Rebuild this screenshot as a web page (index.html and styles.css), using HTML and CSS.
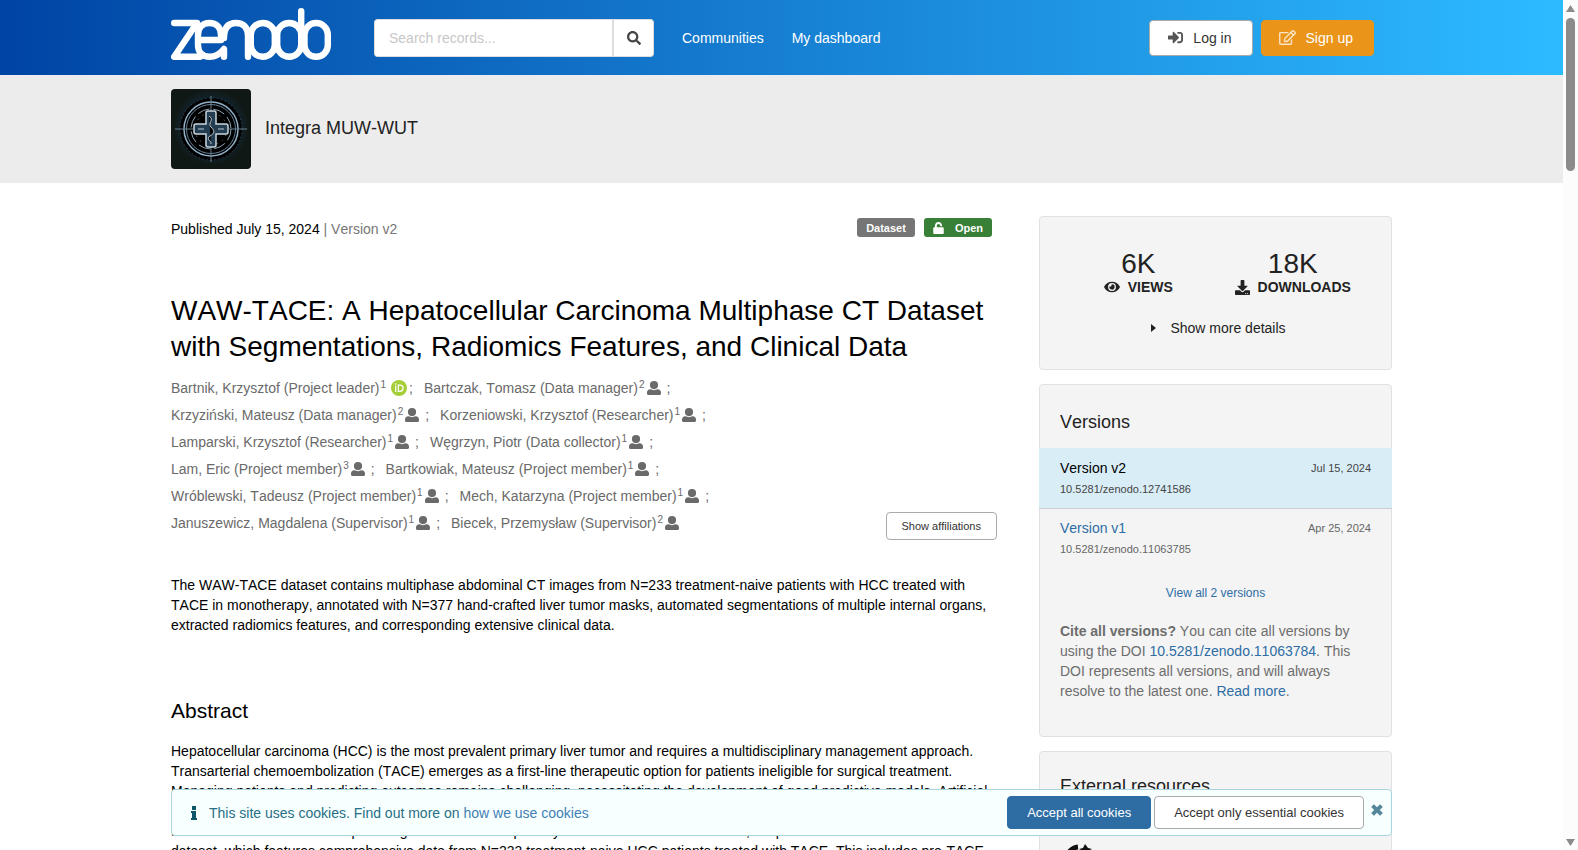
FILE: index.html
```html
<!DOCTYPE html>
<html lang="en">
<head>
<meta charset="utf-8">
<meta name="viewport" content="width=device-width, initial-scale=1">
<title>WAW-TACE: A Hepatocellular Carcinoma Multiphase CT Dataset</title>
<link rel="stylesheet" href="styles.css">
</head>
<body>
<svg class="sprite" aria-hidden="true">
  <symbol id="i-user" viewBox="0 0 512 512"><path d="M256 0a150 150 0 1 1 0 300 150 150 0 0 1 0-300zM120 304h12c72 40 176 40 248 0h12c72 0 120 50 120 120v44c0 26-20 44-44 44H44c-24 0-44-18-44-44v-44c0-70 48-120 120-120z"/></symbol>
  <symbol id="i-search" viewBox="0 0 512 512"><path d="M505 442.700L405.300 343c-4.500-4.500-10.600-7-17-7H372c27.600-35.300 44-79.700 44-128C416 93.100 322.900 0 208 0S0 93.100 0 208s93.100 208 208 208c48.300 0 92.700-16.400 128-44v16.300c0 6.400 2.500 12.500 7 17l99.700 99.700c9.400 9.400 24.600 9.400 33.900 0l28.300-28.300c9.400-9.400 9.400-24.600.1-34zM208 336c-70.700 0-128-57.200-128-128 0-70.700 57.200-128 128-128 70.700 0 128 57.200 128 128 0 70.700-57.200 128-128 128z"/></symbol>
  <symbol id="i-login" viewBox="0 0 512 512"><path d="M416 448h-84c-6.600 0-12-5.400-12-12v-40c0-6.600 5.400-12 12-12h84c17.700 0 32-14.300 32-32V160c0-17.700-14.300-32-32-32h-84c-6.600 0-12-5.400-12-12V76c0-6.600 5.400-12 12-12h84c53 0 96 43 96 96v192c0 53-43 96-96 96zm-47-209L201 71c-15-15-41-4.500-41 17v96H24c-13.300 0-24 10.700-24 24v96c0 13.300 10.700 24 24 24h136v96c0 21.500 26 32 41 17l168-168c9.300-9.400 9.300-24.600 0-34z"/></symbol>
  <symbol id="i-edit" viewBox="0 0 576 512"><path d="M402.300 344.900l32-32c5-5 13.700-1.500 13.700 5.700V464c0 26.500-21.500 48-48 48H48c-26.500 0-48-21.500-48-48V112c0-26.500 21.500-48 48-48h273.500c7.100 0 10.700 8.600 5.700 13.700l-32 32c-1.500 1.500-3.500 2.300-5.700 2.300H48v352h352V350.500c0-2.100.8-4.100 2.300-5.600zm156.600-201.800L296.300 405.700l-90.400 10c-26.200 2.900-48.500-19.200-45.600-45.600l10-90.400L432.900 17.100c22.900-22.900 59.900-22.900 82.700 0l43.200 43.200c22.900 22.900 22.900 60 .1 82.800zM460.100 174L402 115.900 216.200 301.800l-7.300 65.300 65.300-7.300L460.100 174zm64.800-79.700l-43.200-43.200c-4.100-4.100-10.800-4.100-14.800 0L436 82l58.100 58.100 30.900-30.900c4-4.200 4-10.800-.1-14.900z"/></symbol>
  <symbol id="i-unlock" viewBox="0 0 448 512"><path d="M400 224H152v-70c0-40 32-74 72-74s72 32 72 72v8c0 13 11 24 24 24h32c13 0 24-11 24-24v-8C376 68 308 0 223 0 139 0 72 70 72 154v70H48c-26 0-48 22-48 48v192c0 26 22 48 48 48h352c26 0 48-22 48-48V272c0-26-22-48-48-48z"/></symbol>
  <symbol id="i-eye" viewBox="0 0 576 512"><path d="M572.500 241.400C518.300 135.600 410.900 64 288 64S57.700 135.600 3.500 241.400a32.400 32.400 0 0 0 0 29.200C57.700 376.400 165.100 448 288 448s230.300-71.600 284.500-177.400a32.400 32.400 0 0 0 0-29.200zM288 400a144 144 0 1 1 144-144 143.900 143.900 0 0 1-144 144zm0-240a95.300 95.300 0 0 0-25.300 3.800 47.900 47.900 0 0 1-66.900 66.900A95.800 95.800 0 1 0 288 160z"/></symbol>
  <symbol id="i-download" viewBox="0 0 512 512"><path d="M216 0h80c13.300 0 24 10.700 24 24v168h87.700c17.800 0 26.700 21.500 14.100 34.100L269.700 378.300c-7.500 7.500-19.800 7.500-27.300 0L90.100 226.100c-12.600-12.600-3.700-34.100 14.100-34.100H192V24c0-13.300 10.700-24 24-24zm296 376v112c0 13.300-10.700 24-24 24H24c-13.300 0-24-10.700-24-24V376c0-13.300 10.700-24 24-24h146.700l49 49c20.100 20.100 52.500 20.100 72.600 0l49-49H488c13.300 0 24 10.700 24 24zm-124 88c0-11-9-20-20-20s-20 9-20 20 9 20 20 20 20-9 20-20zm64 0c0-11-9-20-20-20s-20 9-20 20 9 20 20 20 20-9 20-20z"/></symbol>
</svg>

<div class="window">
  <div class="page">
    <header class="topbar">
      <div class="container topbar-row">
        <a class="logo" href="#" aria-label="Zenodo">
          <svg viewBox="0 0 160 52" width="160" height="52" fill="none" stroke="#fff" stroke-width="6.400" stroke-linecap="round" stroke-linejoin="round">
            <path d="M3.200 15H26L3.200 48.800H29"/>
            <path d="M27 32H50V27C50 19 45 15 38.500 15S27 19 27 27V37C27 45 32 48.800 38.500 48.800 44 48.800 49 46 53 41V48.800"/>
            <path d="M53 30C53 19 58 15 65 15S77 19 77 28V48.800"/>
            <rect x="79.800" y="15" width="24" height="33.800" rx="12"/>
            <rect x="106.200" y="15" width="24" height="33.800" rx="12"/>
            <path d="M130.200 3.200V30"/>
            <rect x="133.500" y="15" width="23.300" height="33.800" rx="11.600"/>
          </svg>
        </a>
        <form class="search">
          <input type="text" aria-label="Search records" placeholder="Search records...">
          <button type="button" aria-label="Search"><svg width="14" height="14"><use href="#i-search"/></svg></button>
        </form>
        <nav class="nav"><a href="#">Communities</a><a href="#">My dashboard</a></nav>
        <div class="account">
          <button type="button" class="btn login"><svg width="15" height="15"><use href="#i-login"/></svg>Log in</button>
          <button type="button" class="btn signup"><svg width="17" height="15"><use href="#i-edit"/></svg>Sign up</button>
        </div>
      </div>
    </header>

    <section class="community">
      <div class="container community-row">
        <svg class="thumb" viewBox="0 0 80 80" width="80" height="80" fill="none" stroke="#a9bccb">
          <defs><radialGradient id="glow"><stop offset="0" stop-color="#1b3346"/><stop offset=".6" stop-color="#132a3b"/><stop offset="1" stop-color="#101815"/></radialGradient></defs>
          <rect width="80" height="80" fill="#101815" stroke="none"/>
          <circle cx="40" cy="38" r="38" fill="url(#glow)" stroke="none"/>
          <circle cx="40" cy="40" r="31" stroke="#35546a" stroke-dasharray="1 3"/>
          <circle cx="40" cy="40" r="27" stroke="#8fb0c6" stroke-width="1.500"/>
          <circle cx="40" cy="40" r="24.500" stroke="#5f8199"/>
          <circle cx="40" cy="40" r="20" stroke="#8ba3b3" stroke-dasharray="12 4"/>
          <circle cx="40" cy="40" r="16" stroke="#7d95a5" stroke-dasharray="1 5"/>
          <path d="M4 40H22M58 40H76M40 7V22M40 58V73" stroke="#6b8290"/>
          <path d="M37 22h6a2 2 0 0 1 2 2v11h10a2 2 0 0 1 2 2v6a2 2 0 0 1-2 2H45v11a2 2 0 0 1-2 2h-6a2 2 0 0 1-2-2V45H25a2 2 0 0 1-2-2v-6a2 2 0 0 1 2-2h10V24a2 2 0 0 1 2-2z" fill="#233c50" stroke="#c9d6df" stroke-width="1.500"/>
          <path d="M38 27C44 31 36 34 40 38S44 44 39 47 41 52 40 55M27 40h6M47 40h6" stroke="#b9c9d4"/>
        </svg>
        <h2>Integra MUW-WUT</h2>
      </div>
    </section>

    <div class="container columns">
      <main class="record">
        <div class="meta">
          <p>Published July 15, 2024 <span class="muted">| Version v2</span></p>
          <div class="labels">
            <span class="label">Dataset</span>
            <span class="label open"><svg width="11" height="12"><use href="#i-unlock"/></svg>Open</span>
          </div>
        </div>
        <h1>WAW-TACE: A Hepatocellular Carcinoma Multiphase CT Dataset with Segmentations, Radiomics Features, and Clinical Data</h1>
        <div class="creators">
          <ul>
            <li>Bartnik, Krzysztof (Project leader)<sup>1</sup><svg class="orcid" viewBox="0 0 16 16" width="16" height="16"><circle cx="8" cy="8" r="8" fill="#a6ce39"/><path d="M4.700 5.800V12M7.300 5.100V11.300H9A3 3 0 0 0 9 5.100Z" fill="none" stroke="#fff" stroke-width="1.200"/><circle cx="4.700" cy="4" r=".8" fill="#fff"/></svg>;</li>
            <li>Bartczak, Tomasz (Data manager)<sup>2</sup><svg class="person" width="14" height="14"><use href="#i-user"/></svg>;</li>
            <li>Krzyziński, Mateusz (Data manager)<sup>2</sup><svg class="person" width="14" height="14"><use href="#i-user"/></svg>;</li>
            <li>Korzeniowski, Krzysztof (Researcher)<sup>1</sup><svg class="person" width="14" height="14"><use href="#i-user"/></svg>;</li>
            <li>Lamparski, Krzysztof (Researcher)<sup>1</sup><svg class="person" width="14" height="14"><use href="#i-user"/></svg>;</li>
            <li>Węgrzyn, Piotr (Data collector)<sup>1</sup><svg class="person" width="14" height="14"><use href="#i-user"/></svg>;</li>
            <li>Lam, Eric (Project member)<sup>3</sup><svg class="person" width="14" height="14"><use href="#i-user"/></svg>;</li>
            <li>Bartkowiak, Mateusz (Project member)<sup>1</sup><svg class="person" width="14" height="14"><use href="#i-user"/></svg>;</li>
            <li>Wróblewski, Tadeusz (Project member)<sup>1</sup><svg class="person" width="14" height="14"><use href="#i-user"/></svg>;</li>
            <li>Mech, Katarzyna (Project member)<sup>1</sup><svg class="person" width="14" height="14"><use href="#i-user"/></svg>;</li>
            <li>Januszewicz, Magdalena (Supervisor)<sup>1</sup><svg class="person" width="14" height="14"><use href="#i-user"/></svg>;</li>
            <li>Biecek, Przemysław (Supervisor)<sup>2</sup><svg class="person" width="14" height="14"><use href="#i-user"/></svg></li>
          </ul>
          <button type="button" class="btn small">Show affiliations</button>
        </div>
        <p class="summary">The WAW-TACE dataset contains multiphase abdominal CT images from N=233 treatment-naive patients with HCC treated with TACE in monotherapy, annotated with N=377 hand-crafted liver tumor masks, automated segmentations of multiple internal organs, extracted radiomics features, and corresponding extensive clinical data.</p>
        <h2>Abstract</h2>
        <p class="abstract">Hepatocellular carcinoma (HCC) is the most prevalent primary liver tumor and requires a multidisciplinary management approach.<br>
        Transarterial chemoembolization (TACE) emerges as a first-line therapeutic option for patients ineligible for surgical treatment.<br>
        Managing patients and predicting outcomes remains challenging, necessitating the development of good predictive models. Artificial<br>
        intelligence and radiomics are actively studied for this task, but the data needed to train and validate models are still scarce.<br>
        Most of the data has been kept in single centers and is publicly not available. To address this, we present the WAW-TACE<br>
        dataset, which features comprehensive data from N=233 treatment-naive HCC patients treated with TACE. This includes pre-TACE</p>
      </main>

      <aside class="sidebar">
        <section class="card stats">
          <div class="stat-row">
            <div class="stat"><span class="num">6K</span><span class="cap"><svg width="16" height="14"><use href="#i-eye"/></svg>VIEWS</span></div>
            <div class="stat"><span class="num">18K</span><span class="cap"><svg width="15" height="15"><use href="#i-download"/></svg>DOWNLOADS</span></div>
          </div>
          <button type="button" class="more"><svg viewBox="0 0 5 8" width="5" height="8"><path d="M0 0L5 4L0 8Z"/></svg>Show more details</button>
        </section>
        <section class="card">
          <h3>Versions</h3>
          <div class="version current">
            <div><span>Version v2</span><small>Jul 15, 2024</small></div>
            <small>10.5281/zenodo.12741586</small>
          </div>
          <div class="version">
            <div><a href="#">Version v1</a><small>Apr 25, 2024</small></div>
            <small>10.5281/zenodo.11063785</small>
          </div>
          <a class="all" href="#">View all 2 versions</a>
          <p class="cite"><strong>Cite all versions?</strong> You can cite all versions by using the DOI <a href="#">10.5281/zenodo.11063784</a>. This DOI represents all versions, and will always resolve to the latest one. <a href="#">Read more</a>.</p>
        </section>
        <section class="card external">
          <h3>External resources</h3>
          <svg class="resource" viewBox="0 0 30 30" width="30" height="30"><path d="M14 3A12 12 0 1 0 27 16" fill="none" stroke="#111" stroke-width="5"/><path d="M21 0L24 4L28 5L24 7L21 11L19 7L15 5L19 4Z" fill="#111"/></svg>
        </section>
      </aside>
    </div>

    <div class="container cookie-wrap">
      <div class="cookies">
        <svg class="info" viewBox="0 0 6 14" width="6" height="14"><path d="M1 0H5V4H1ZM0 5H5V12H6V14H0V12H1V7H0Z"/></svg>
        <p>This site uses cookies. Find out more on <a href="#">how we use cookies</a></p>
        <button type="button" class="btn primary">Accept all cookies</button>
        <button type="button" class="btn">Accept only essential cookies</button>
        <button type="button" class="close" aria-label="Close"><svg viewBox="0 0 10 10" width="12" height="12"><path d="M1.300 1.300L8.700 8.700M8.700 1.300L1.300 8.700" stroke="currentColor" stroke-width="3.200"/></svg></button>
      </div>
    </div>
  </div>
  <div class="scrollbar" aria-hidden="true">
    <svg viewBox="0 0 9 7" width="9" height="7"><path d="M4.500 0L9 7H0Z"/></svg>
    <span class="handle"></span>
    <svg class="down" viewBox="0 0 9 7" width="9" height="7"><path d="M0 0H9L4.500 7Z"/></svg>
  </div>
</div>
</body>
</html>
```
FILE: styles.css
```css
*, *::before, *::after { box-sizing: border-box; }

body {
  margin: 0;
  overflow: hidden;
  font: 14px/20px "Liberation Sans", Arial, Helvetica, sans-serif;
  font-kerning: none;
  color: #000;
  background: #fff;
}

h1, h2, h3, p, ul { margin: 0; padding: 0; font-weight: 400; }
a { color: #2e6da4; text-decoration: none; }
button, input { font: inherit; font-kerning: none; }
svg { display: block; flex: none; fill: currentColor; }
.sprite { display: none; }

.window { display: flex; height: 100vh; }
.page { position: relative; flex: 1; min-width: 0; overflow: hidden; }
.container { width: 100%; max-width: 1221px; margin: 0 auto; }

/* Top bar */
.topbar { background: linear-gradient(to right, #0044a4, #2dbbff); }
.topbar-row { display: flex; align-items: center; height: 75px; padding-right: 18px; }
.logo { margin: 0 43px 7px 0; }
.logo svg { fill: none; }
.search { display: flex; width: 280px; height: 38px; }
.search input {
  flex: 1;
  min-width: 0;
  padding: 0 14px;
  border: 1px solid #ddd;
  border-right: 0;
  border-radius: 4px 0 0 4px;
  background: #fff;
}
.search input::placeholder { color: #c7c7c7; opacity: 1; }
.search button {
  display: flex;
  align-items: center;
  justify-content: center;
  width: 42px;
  padding: 0;
  border: 1px solid #ddd;
  border-left-width: 2px;
  border-radius: 0 4px 4px 0;
  background: #fff;
  color: #444;
}
.nav { display: flex; gap: 28px; margin-left: 28px; }
.nav a { color: #fff; }
.account { display: flex; gap: 8px; margin-left: auto; }

.btn {
  display: flex;
  align-items: center;
  justify-content: center;
  height: 36px;
  padding: 0 19px;
  gap: 10px;
  border: 1px solid #aaa;
  border-radius: 4px;
  background: #fff;
  color: #333;
}
.btn.login { padding: 0 20px 0 18px; }
.login svg { color: #555; }
.btn.signup { padding: 0 20px 0 17px; border-color: #eb941a; background: #eb941a; color: #fff; }
.signup svg { opacity: .75; }
.btn.small { height: 28px; padding: 0 15px; font-size: 11px; }
.btn.primary { border-color: #2e6da4; background: #2e6da4; color: #fff; }

/* Community strip */
.community { background: #ececec; }
.community-row { display: flex; align-items: center; gap: 14px; padding-top: 14px; padding-bottom: 14px; }
.thumb { border-radius: 4px; }
.community h2 { padding-bottom: 2px; font-size: 18px; color: #222; }

/* Record */
.columns { display: flex; gap: 42px; padding-top: 33px; }
.record { flex: 1; min-width: 0; }
.meta { display: flex; justify-content: space-between; padding: 2px 5px 0 0; }
.meta p { padding: 1px 0 3px; }
.muted { color: #767676; }
.labels { display: flex; gap: 9px; }
.label {
  display: flex;
  align-items: center;
  gap: 11px;
  height: 19px;
  padding: 0 9px;
  border-radius: 3px;
  background: #767676;
  color: #fff;
  font-size: 11px;
  font-weight: 700;
}
.label.open { background: #388038; }
h1 { margin-top: 51px; font-size: 28px; line-height: 36px; }
.creators { display: flex; align-items: flex-end; justify-content: space-between; margin-top: 9px; color: #6a6a6a; }
.creators ul { display: flex; flex-wrap: wrap; column-gap: 11px; width: 560px; padding-bottom: 4px; list-style: none; }
.creators li { display: flex; height: 27px; align-items: center; white-space: nowrap; }
sup { align-self: flex-start; margin: 0 0 0 1px; font-size: 10px; line-height: 22px; }
.person { margin: 0 6px 0 2px; }
.orcid { margin: 0 2px 0 5px; }
.summary { margin-top: 35px; }
.record h2 { margin-top: 64px; font-size: 21px; line-height: 24px; }
.abstract { margin-top: 18px; white-space: nowrap; }

/* Sidebar */
.sidebar { display: flex; flex-direction: column; gap: 14px; width: 353px; }
.card {
  padding-bottom: 35px;
  border: 1px solid #e0e1e2;
  border-radius: 4px;
  background: #f4f4f4;
}
.card h3 { padding: 27px 20px 16px; font-size: 18px; color: #222; }
.card.external h3 { padding-top: 24px; }
.stats { padding: 32px 21px 31px; color: #222; }
.stat-row { display: grid; grid-template-columns: 1fr 1fr; }
.stat { display: flex; flex-direction: column; align-items: center; }
.num { font-size: 28px; line-height: 30px; }
.cap { display: flex; align-items: center; gap: 8px; font-weight: 700; line-height: 16px; }
.more {
  display: flex;
  align-items: center;
  gap: 14px;
  margin: 23px auto 0;
  padding: 0 0 0 6px;
  border: 0;
  background: none;
  color: #222;
}
.version { padding: 9px 20px; }
.version div { display: flex; justify-content: space-between; align-items: center; line-height: 21px; }
.version small { display: block; color: #666; font-size: 11px; line-height: 21px; }
.version.current { margin: 0 -1px; padding: 10px 21px 8px; border-bottom: 1px solid #ccc; background: #d9edf7; }
.current small { color: #444; }
.all { display: block; margin-top: 14px; text-align: center; font-size: 12px; }
.cite { margin: 18px 20px 0; color: #6d6d6d; }
.resource { margin: 32px 24px 0; }

/* Cookie notice */
.cookie-wrap { position: absolute; right: 0; bottom: 14px; left: 0; }
.cookies {
  display: flex;
  align-items: center;
  gap: 3px;
  height: 47px;
  padding: 0 8px 0 19px;
  border: 1px solid #a9d5de;
  border-radius: 4px;
  background: #f8ffff;
  color: #276f86;
}
.cookies p { flex: 1; margin-left: 9px; }
.cookies a { color: #3f7fb5; }
.cookies .btn { height: 33px; font-size: 13px; }
.info { color: #0e566c; }
.close { align-self: flex-start; margin-left: 4px; padding: 14px 0; border: 0; background: none; color: #53879a; }

/* Scroll bar */
.scrollbar {
  display: flex;
  flex-direction: column;
  align-items: center;
  gap: 6px;
  width: 15px;
  padding: 5px 0 4px;
  background: #fcfcfc;
  color: #8b8b8b;
}
.handle { width: 9px; height: 18vh; border-radius: 5px; background: #8b8b8b; }
.down { margin-top: auto; }
```
